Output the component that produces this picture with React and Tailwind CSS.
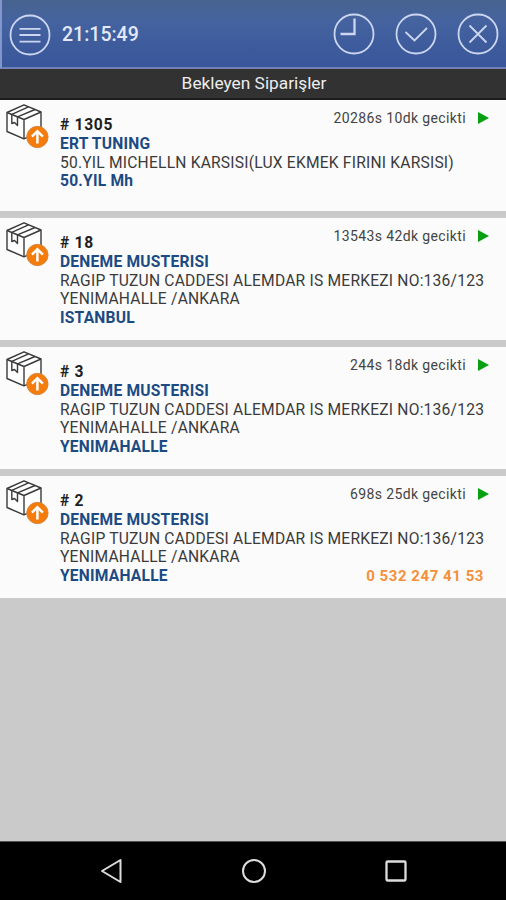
import React from "react";

const orders = [
  {
    id: 1305,
    customer: "ERT TUNING",
    address: ["50.YIL MICHELLN KARSISI(LUX EKMEK FIRINI KARSISI)"],
    region: "50.YIL Mh",
    delay: "20286s 10dk gecikti",
  },
  {
    id: 18,
    customer: "DENEME MUSTERISI",
    address: ["RAGIP TUZUN CADDESI ALEMDAR IS MERKEZI NO:136/123", "YENIMAHALLE /ANKARA"],
    region: "ISTANBUL",
    delay: "13543s 42dk gecikti",
  },
  {
    id: 3,
    customer: "DENEME MUSTERISI",
    address: ["RAGIP TUZUN CADDESI ALEMDAR IS MERKEZI NO:136/123", "YENIMAHALLE /ANKARA"],
    region: "YENIMAHALLE",
    delay: "244s 18dk gecikti",
  },
  {
    id: 2,
    customer: "DENEME MUSTERISI",
    address: ["RAGIP TUZUN CADDESI ALEMDAR IS MERKEZI NO:136/123", "YENIMAHALLE /ANKARA"],
    region: "YENIMAHALLE",
    delay: "698s 25dk gecikti",
    phone: "0 532 247 41 53",
  },
];

const RoundButton = ({ label, children }) => (
  <button type="button" aria-label={label} className="block h-[42px] w-[42px] shrink-0">
    <svg viewBox="0 0 42 42" fill="none" stroke="#ccd6f0" strokeWidth="1.8" className="block h-full w-full">
      <circle cx="21" cy="21" r="19.5" />
      {children}
    </svg>
  </button>
);

const PackageIcon = () => (
  <svg viewBox="0 0 46 50" fill="none" className="block h-[50px] w-[46px]">
    <g stroke="#3a3a3a" strokeWidth="1.4" strokeLinejoin="round">
      <path d="M2 12.5 L19 4.8 L36 12 V31 L19 38.8 L2 31.5 Z" fill="#ffffff" />
      <path d="M2 12.5 L19 19.5 L36 12 M19 19.5 V38.8" />
      <path d="M6.8 14.4 L23.5 6.8 M12.5 16.8 L30 9.5 M6.8 14.4 V23.5 L9.5 22.5 L12.5 25.5 V16.8" />
    </g>
    <circle cx="32.4" cy="37" r="10.7" fill="#f57c0a" stroke="#cf8743" strokeWidth="0.9" />
    <path d="M32.4 43.5 V32 M26.9 36.7 L32.4 31.2 L37.9 36.7" stroke="#ffffff" strokeWidth="2.5" />
  </svg>
);

const OrderCard = ({ order }) => (
  <li className={`flex bg-[#fbfbfb] pl-[5px] ${order.address.length > 1 ? "h-[122px]" : "h-[111px]"}`}>
    <div className="w-[55px] shrink-0">
      <PackageIcon />
    </div>
    <div className="min-w-0 flex-1 pt-4 text-[15.6px] leading-[18.8px] tracking-[0.21px] whitespace-nowrap text-[#3a3a3a]">
      <div className="flex h-[18.8px] items-start justify-between">
        <h2 className="font-bold tracking-[0.7px] text-[#1e1e1e]"># {order.id}</h2>
        <div className="-mt-[7px] flex items-center pr-[17px]">
          <span className="text-[14px] tracking-[0.38px] text-[#444444]">{order.delay}</span>
          <svg viewBox="0 0 11 12" className="ml-3 h-3 w-[11px] fill-[#08a012]">
            <path d="M0 0 L11 6 L0 12 Z" />
          </svg>
        </div>
      </div>
      <p className="font-bold text-[#1c4b84]">{order.customer}</p>
      {order.address.map((line) => (
        <p key={line}>{line}</p>
      ))}
      <div className="flex justify-between pr-[22px]">
        <p className="font-bold text-[#1c4b84]">{order.region}</p>
        {order.phone && <p className="text-[15px] font-bold tracking-[0.55px] text-[#f5903b]">{order.phone}</p>}
      </div>
    </div>
  </li>
);

const App = () => {
  return (
    <div className="flex h-[900px] w-[506px] flex-col overflow-hidden bg-[#cacaca] font-[Roboto,sans-serif]">
      <header className="flex h-[69px] shrink-0 items-center border-b-2 border-l-2 border-b-[#7181b5] border-l-[#8295cc] bg-linear-to-b from-[#48638f] via-[#45639f] via-30% to-[#38569a] pt-px pr-[7px] pl-[7px]">
        <div className="flex items-center gap-[11px] pt-[2px]">
          <RoundButton label="Menu">
            <path d="M10.5 14.8 H31.5 M10.5 21 H31.5 M10.5 27.7 H31.5" />
          </RoundButton>
          <time className="text-[19.5px] font-medium text-[#e3e9f8]">21:15:49</time>
        </div>
        <div className="ml-auto flex gap-5">
          <RoundButton label="Bekleyen">
            <path d="M21.5 5.5 V21 H7.5" strokeWidth="2.3" />
          </RoundButton>
          <RoundButton label="Onayla">
            <path d="M10.5 19 L19.5 27.5 L32 15" />
          </RoundButton>
          <RoundButton label="Kapat">
            <path d="M12.5 12.5 L29.5 29.5 M29.5 12.5 L12.5 29.5" />
          </RoundButton>
        </div>
      </header>

      <h1 className="flex h-[31px] shrink-0 items-center justify-center border-b-2 border-[#1c1c1c] bg-[#323232] pt-px pl-[2px] text-[17.3px] text-[#ededed]">
        Bekleyen Siparişler
      </h1>

      <ul className="flex flex-1 flex-col gap-[7px]">
        {orders.map((order) => (
          <OrderCard key={order.id} order={order} />
        ))}
      </ul>

      <nav className="flex h-[59px] shrink-0 items-center justify-between border-t border-[#555555] bg-black pr-[98px] pl-[100px]">
        <svg viewBox="0 0 24 26" className="h-[26px] w-6 fill-none stroke-[#dddddd] stroke-2" strokeLinejoin="round">
          <path d="M20.5 2 V24 L2 13 Z" />
        </svg>
        <svg viewBox="0 0 26 26" className="h-[26px] w-[26px] fill-none stroke-[#dddddd] stroke-2">
          <circle cx="13" cy="13" r="11" />
        </svg>
        <svg viewBox="0 0 24 24" className="h-6 w-6 fill-none stroke-[#dddddd] stroke-[2.3]">
          <rect x="2.5" y="2.5" width="19" height="19" rx="1" />
        </svg>
      </nav>
    </div>
  );
};

export default App;
